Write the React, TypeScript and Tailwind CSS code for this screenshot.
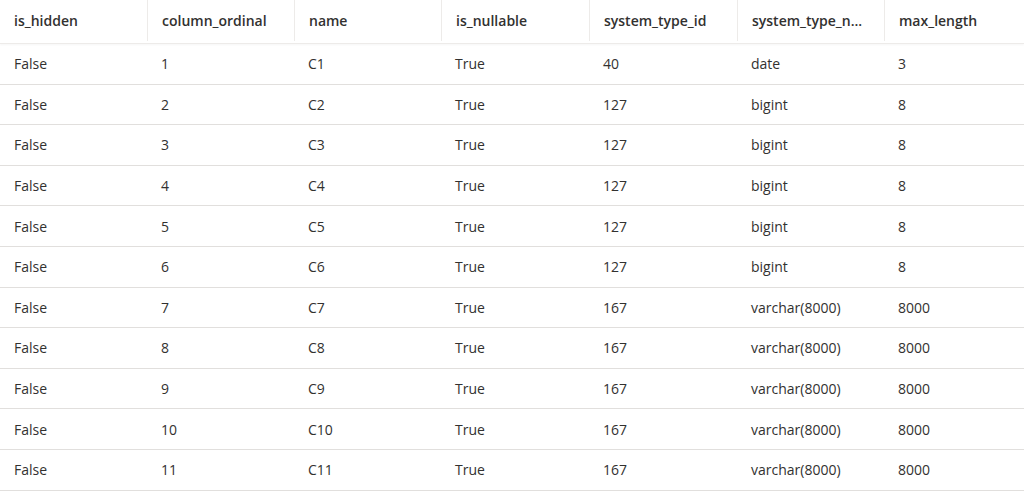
const COLS = ['is_hidden', 'column_ordinal', 'name', 'is_nullable', 'system_type_id', 'system_type_n...', 'max_length'];

const ROWS = Array.from({ length: 11 }, (_, i) => {
  const n = i + 1;
  const [id, type, len] =
    n === 1 ? ['40', 'date', '3'] : n <= 6 ? ['127', 'bigint', '8'] : ['167', 'varchar(8000)', '8000'];
  return ['False', String(n), `C${n}`, 'True', id, type, len];
});

const grid = 'grid grid-cols-[147px_147px_147px_148px_148px_147px_140px]';

export default function App() {
  return (
    <div className="w-[1024px] h-[492px] bg-white text-[#323130] text-[14px] overflow-hidden" style={{ fontFamily: '"Open Sans", "Noto Sans", sans-serif' }}>
      <div className={`${grid} h-[44px] border-b border-[#edebe9] shadow-[0_1px_2px_rgba(0,0,0,0.04)]`}>
        {COLS.map((c, i) => (
          <div key={c} className={`flex items-center pl-[14px] font-semibold ${i > 0 ? 'border-l border-[#edebe9]' : ''} mb-[2px]`}>
            {c}
          </div>
        ))}
      </div>
      {ROWS.map((r, i) => (
        <div key={i} className={`${grid} h-[40.6px] border-b border-[#e1dfdd]`}>
          {r.map((v, j) => (
            <div key={j} className="flex items-center pl-[14px]">{v}</div>
          ))}
        </div>
      ))}
    </div>
  );
}
